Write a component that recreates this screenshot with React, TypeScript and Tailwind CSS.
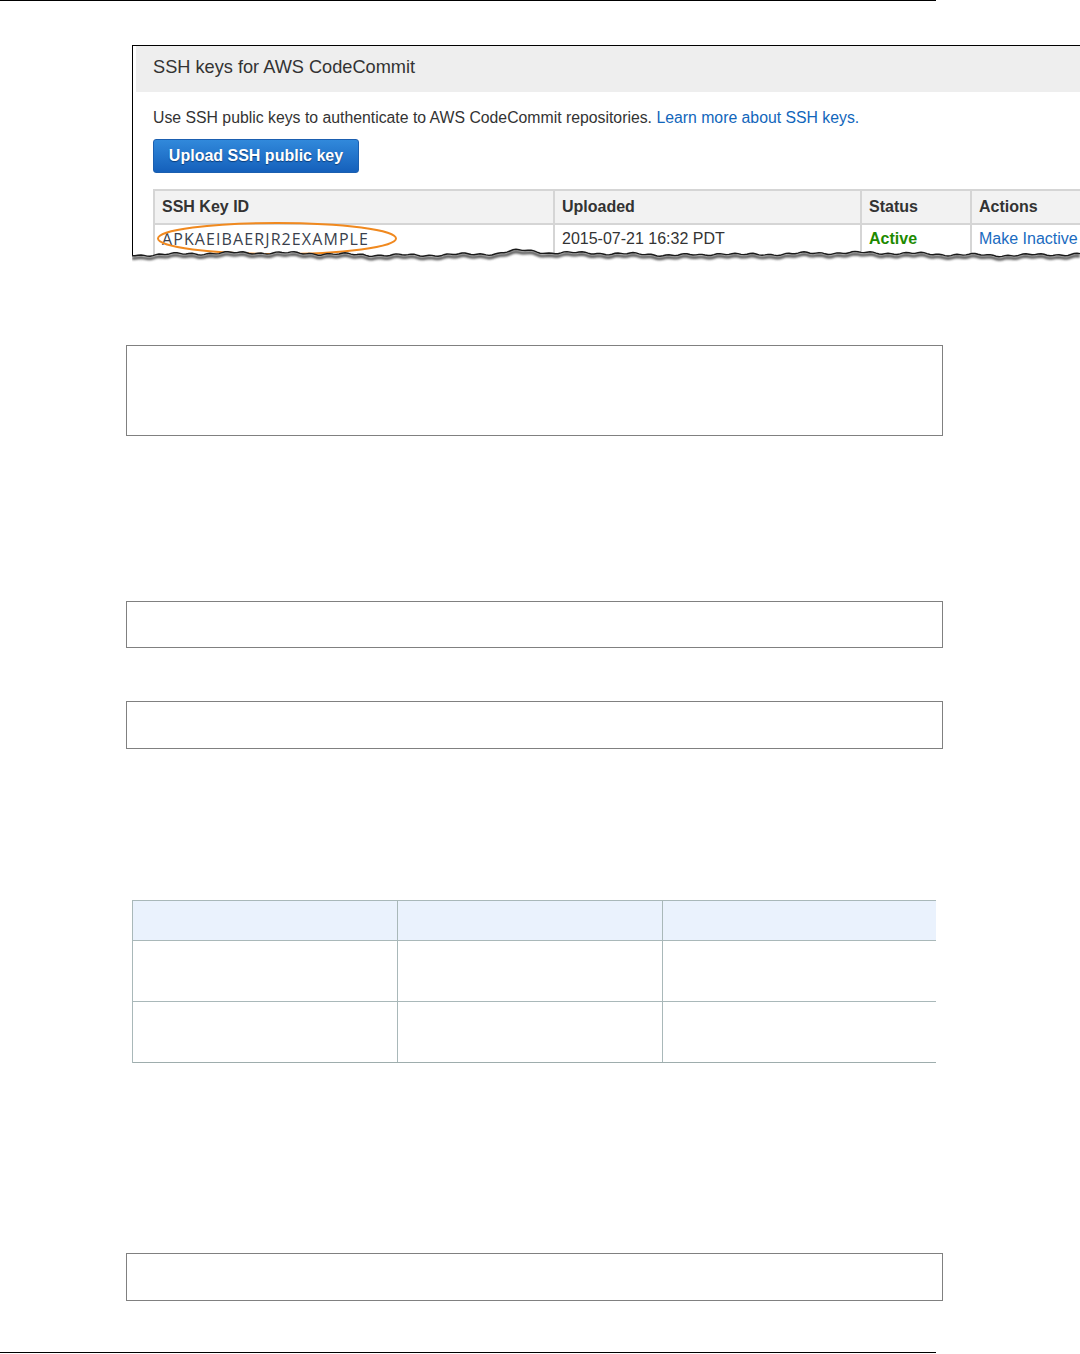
// React is used implicitly in JSX

const arial = { fontFamily: '"Liberation Sans", Arial, sans-serif' };

// jagged "torn paper" edge across the bottom of the screenshot
function tornPath(width: number) {
  const pts: string[] = [];
  for (let x = 0; x <= width; x += 3) {
    const y =
      7 +
      0.9 * Math.sin(x * 0.11) +
      0.7 * Math.sin(x * 0.37 + 1.3) +
      1.2 * Math.sin(x * 0.021 + 2.1) -
      (Math.abs(x - 390) < 25 ? 2.5 * Math.cos(((x - 390) / 25) * 1.57) : 0) -
      (Math.abs(x - 590) < 18 ? 1.8 * Math.cos(((x - 590) / 18) * 1.57) : 0);
    pts.push(`${x},${y.toFixed(1)}`);
  }
  return pts;
}

function TornEdge() {
  const w = 950;
  const pts = tornPath(w);
  const line = 'M' + pts.join(' L');
  const fill = line + ` L${w},20 L0,20 Z`;
  return (
    <svg className="absolute left-0 bottom-0" width={w} height={20} viewBox={`0 0 ${w} 20`}>
      <defs>
        <filter id="blur" x="-5%" y="-100%" width="110%" height="300%">
          <feGaussianBlur stdDeviation="1" />
        </filter>
      </defs>
      <path d={fill} fill="#ffffff" />
      <path d={line} transform="translate(0,2.5)" fill="none" stroke="#555" strokeWidth={3} filter="url(#blur)" />
      <path d={line} fill="none" stroke="#1a1a1a" strokeWidth={1.4} />
    </svg>
  );
}

function CodeCommitShot() {
  const th = 'border-2 border-[#d5d5d5] px-[7px] text-left font-bold';
  const td = 'border-x-2 border-[#d5d5d5] px-[7px] pt-[2px]';
  return (
    <div className="relative ml-[132px] mt-[45px] h-[222px] w-[948px] overflow-hidden" style={arial}>
      <div className="h-full border-l border-t border-black bg-white pl-[3px]">
        <div className="flex h-[46px] items-center bg-[#eeeeee] pb-[3px] pl-[17px] text-[18.2px] text-[#333]">
          SSH keys for AWS CodeCommit
        </div>
        <div className="pl-[17px]">
          <p className="mt-[16px] text-[15.8px] leading-[20px] text-[#333]">
            Use SSH public keys to authenticate to AWS CodeCommit repositories.{' '}
            <span className="text-[#1166bb]">Learn more about SSH keys.</span>
          </p>
          <button className="mt-[11px] flex h-[34px] w-[206px] items-center justify-center rounded-[3px] border border-[#1b5fb0] bg-gradient-to-b from-[#3189db] to-[#1560bb] text-[16px] font-bold text-white [text-shadow:0_1px_1px_#0b3d7a]">
            Upload SSH public key
          </button>
          <table className="mt-[16px] w-[1000px] table-fixed border-collapse text-[16px] text-[#333]">
            <colgroup>
              <col className="w-[400px]" />
              <col className="w-[307px]" />
              <col className="w-[110px]" />
              <col className="w-[183px]" />
            </colgroup>
            <thead>
              <tr className="h-[34px] bg-[#f2f2f2]">
                <th className={th}>SSH Key ID</th>
                <th className={th}>Uploaded</th>
                <th className={th}>Status</th>
                <th className={th}>Actions</th>
              </tr>
            </thead>
            <tbody>
              <tr className="h-[34px] align-top">
                <td className={`${td} text-[#3a3f4c] tracking-[1.1px]`} style={{ fontFamily: '"Open Sans", sans-serif' }}>
                  APKAEIBAERJR2EXAMPLE
                </td>
                <td className={td}>2015-07-21 16:32 PDT</td>
                <td className={`${td} font-bold text-[#1d8a00]`}>Active</td>
                <td className={`${td} text-[#1a6bc0]`}>Make Inactive</td>
              </tr>
            </tbody>
          </table>
        </div>
      </div>
      {/* orange highlight round the key id */}
      <svg className="absolute left-[23px] top-[176px]" width={244} height={36} viewBox="0 0 244 36">
        <ellipse cx={122} cy={17.5} rx={119} ry={15.5} fill="none" stroke="#f0891f" strokeWidth={2} />
      </svg>
      <TornEdge />
    </div>
  );
}

function EmptyBox({ h, mt }: { h: string; mt: string }) {
  return <div className={`ml-[126px] w-[817px] border border-[#808080] ${h} ${mt}`} />;
}

function EmptyTable() {
  const cell = 'border-r border-[#a9b8b9]';
  return (
    <div className="ml-[132px] mt-[151px] w-[804px] border-l border-[#a9b8b9]">
      <div className="grid h-[41px] grid-cols-[265px_265px_274px] border-y border-[#a9b8b9] bg-[#eaf2fd]">
        <div className={cell} />
        <div className={cell} />
        <div />
      </div>
      <div className="grid h-[61px] grid-cols-[265px_265px_274px] border-b border-[#a9b8b9]">
        <div className={cell} />
        <div className={cell} />
        <div />
      </div>
      <div className="grid h-[61px] grid-cols-[265px_265px_274px] border-b border-[#9eadad]">
        <div className={cell} />
        <div className={cell} />
        <div />
      </div>
    </div>
  );
}

export default function App() {
  return (
    <div className="relative h-[1354px] w-[1080px] overflow-hidden bg-white">
      <div className="h-px w-[936px] bg-black" />
      <div className="-mt-px">
        <CodeCommitShot />
      </div>
      <EmptyBox h="h-[91px]" mt="mt-[78px]" />
      <EmptyBox h="h-[47px]" mt="mt-[165px]" />
      <EmptyBox h="h-[48px]" mt="mt-[53px]" />
      <EmptyTable />
      <EmptyBox h="h-[48px]" mt="mt-[190px]" />
      <div className="mt-[51px] h-px w-[936px] bg-black" />
    </div>
  );
}
